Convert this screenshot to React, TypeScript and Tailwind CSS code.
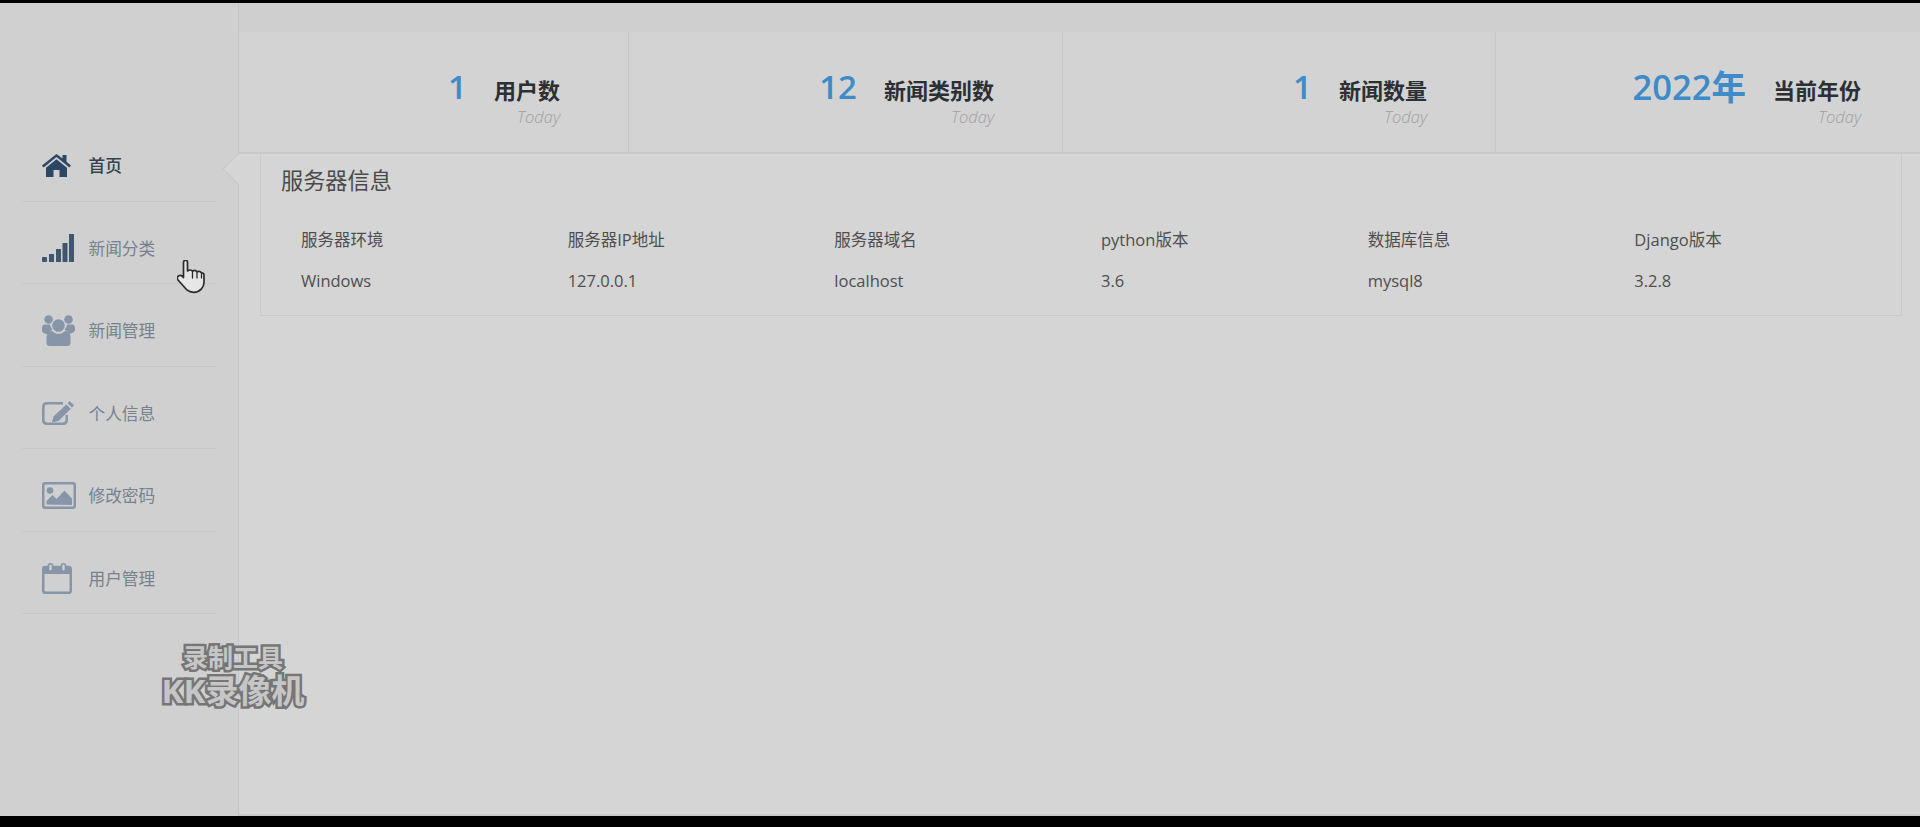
import type { ReactNode } from 'react';

const HomeIcon = () => (
  <svg width="29" height="23" viewBox="0 0 29 23" fill="#2b4763">
    <path d="M14.5 0 0 11.5l1.6 2L14.5 3l12.9 10.5 1.6-2-4.5-3.7V1h-4v3.4z" />
    <path d="M14.5 5.2 4 13.7V23h7.5v-7h6v7H25v-9.3z" />
  </svg>
);

const SignalIcon = () => (
  <svg width="32" height="28" viewBox="0 0 32 28" fill="#40566e">
    <rect x="0" y="23" width="5" height="5" rx="1" />
    <rect x="7" y="20" width="5" height="8" />
    <rect x="14" y="15" width="5" height="13" />
    <rect x="20.5" y="9" width="5" height="19" />
    <rect x="27" y="0" width="5" height="28" />
  </svg>
);

const UsersIcon = () => (
  <svg width="33" height="31" viewBox="0 0 33 31" fill="#8695a8">
    <circle cx="6.5" cy="4.5" r="4.3" />
    <circle cx="26.5" cy="4.5" r="4.3" />
    <circle cx="16.5" cy="10.5" r="6.3" />
    <path d="M0 13c0-2.5 1.5-3.5 3-3.5h5c.5 2 1 3.5 2.5 5-2 1-3.5 2.5-4 4.5C3 19.5 0 18 0 15.5z" />
    <path d="M33 13c0-2.5-1.5-3.5-3-3.5h-5c-.5 2-1 3.5-2.5 5 2 1 3.5 2.5 4 4.5 3.5-.5 6.5-2 6.5-4.5z" />
    <path d="M9.5 15.5c2 2.5 4.5 3.3 7 3.3s5-.8 7-3.3c3 1 5 3 5 6.5v6c0 2-1.5 3-3 3h-18c-1.5 0-3-1-3-3v-6c0-3.5 2-5.5 5-6.500z" />
  </svg>
);

const EditIcon = () => (
  <svg width="32" height="25" viewBox="0 0 32 25" fill="none">
    <path
      d="M21 2.3H5C2.8 2.3 1.3 3.8 1.3 6v13c0 2.200 1.500 3.700 3.700 3.700h16c2.200 0 3.700-1.500 3.700-3.700v-5"
      stroke="#8695a8"
      strokeWidth="2.5"
    />
    <path d="M27.5 0 32 4.200l-2 2.300-4.500-4.300zM24.300 3.500l4.500 4.300L16.500 20 10 21.500l1.500-6z" fill="#8695a8" />
  </svg>
);

const ImageIcon = () => (
  <svg width="34" height="27" viewBox="0 0 34 27" fill="none">
    <rect x="1.2" y="1.2" width="31.6" height="24.6" rx="2" stroke="#8695a8" strokeWidth="2.5" />
    <circle cx="8" cy="8.5" r="3.3" fill="#8695a8" />
    <path d="M4.5 22.500V19l6-6 4 4 8-8.500 7.500 8v6.500z" fill="#8695a8" />
  </svg>
);

const CalendarIcon = () => (
  <svg width="30" height="31" viewBox="0 0 30 31" fill="none">
    <rect x="1.2" y="4" width="27.6" height="25.8" rx="2" stroke="#8695a8" strokeWidth="2.5" />
    <rect x="1" y="4" width="28" height="7" fill="#8695a8" />
    <rect x="6.5" y="0.8" width="4" height="7.5" rx="2" fill="#d0d0d0" stroke="#8695a8" strokeWidth="1.6" />
    <rect x="19.5" y="0.8" width="4" height="7.5" rx="2" fill="#d0d0d0" stroke="#8695a8" strokeWidth="1.6" />
  </svg>
);

const HandCursor = () => (
  <svg
    className="absolute top-[260px] left-[177px] z-20"
    width="28"
    height="34"
    viewBox="0 0 28 34"
    fill="#e6e6e6"
    stroke="#2b2b2b"
    strokeWidth="1.7"
    strokeLinejoin="round"
    strokeLinecap="round"
  >
    <path d="M6.5 2.5c0-3 4-3 4 0V11c2-1.5 4-1.2 5 .2 1.5-1 3.5-.8 4.500.6 1.500-.8 3.500-.4 4.500 1 1.500-.2 2.500 1 2.500 2.500v7c0 5-4 10-10 10-4.500 0-7-1.500-9.500-5L1 20c-1.500-2-.5-4 1.500-4.500 1.500-.3 3 .5 4 2z" />
    <path d="M15.5 11.5V18M20 12v6M24.5 13v5" fill="none" strokeWidth="1.3" />
  </svg>
);

interface NavItem {
  label: string;
  icon: ReactNode;
  active?: boolean;
}

const navItems: NavItem[] = [
  { label: '首页', icon: <HomeIcon />, active: true },
  { label: '新闻分类', icon: <SignalIcon /> },
  { label: '新闻管理', icon: <UsersIcon /> },
  { label: '个人信息', icon: <EditIcon /> },
  { label: '修改密码', icon: <ImageIcon /> },
  { label: '用户管理', icon: <CalendarIcon /> },
];

const stats = [
  { value: '1', label: '用户数', width: 'w-[390px]', pad: 'pr-[68px]' },
  { value: '12', label: '新闻类别数', width: 'w-[434px]', pad: 'pr-[68px]' },
  { value: '1', label: '新闻数量', width: 'w-[433px]', pad: 'pr-[68px]' },
  { value: '2022年', label: '当前年份', width: 'flex-1', pad: 'pr-[59px]', strong: true },
];

const headers = ['服务器环境', '服务器IP地址', '服务器域名', 'python版本', '数据库信息', 'Django版本'];
const values = ['Windows', '127.0.0.1', 'localhost', '3.6', 'mysql8', '3.2.8'];

const App = () => {
  return (
    <div className="relative flex h-[827px] w-[1920px] flex-col overflow-hidden bg-black font-['Open_Sans','Noto_Sans_CJK_SC',sans-serif]">
      <div className="mt-[3px] flex h-[813px] bg-[#d5d5d5]">
        {/* sidebar */}
        <aside className="z-10 w-[239px] shrink-0 border-r border-[#c2c6c9] bg-[#d0d0d0] pt-[116px] pl-[22px]">
          <ul className="w-[195px]">
            {navItems.map((item) => (
              <li
                key={item.label}
                className="relative flex h-[82.5px] items-center border-b border-[#c5c9ce] pt-3 pl-5"
              >
                <span className="flex w-[46.5px] shrink-0 items-center">{item.icon}</span>
                <span
                  className={
                    item.active
                      ? 'text-[16.7px] font-medium text-[#36414e]'
                      : 'text-[16.7px] text-[#77818f]'
                  }
                >
                  {item.label}
                </span>
                {item.active && (
                  <span className="absolute top-[38.5px] left-[205px] h-[22px] w-[22px] rotate-45 border-b border-l border-[#c5c8ca] bg-[#d5d5d5]" />
                )}
              </li>
            ))}
          </ul>
        </aside>

        <div className="flex min-w-0 flex-1 flex-col border-b-2 border-[#c7cac8]">
          <div className="h-[29px] shrink-0 bg-[#cfcfcf]" />

          {/* stat row */}
          <div className="flex h-[122px] shrink-0 border-b-2 border-[#c9c9c9] bg-[#d3d3d3]">
            {stats.map((s) => (
              <div
                key={s.label}
                className={`flex justify-end border-r border-[#c9c9c9] last:border-r-0 ${s.width} ${s.pad}`}
              >
                <span
                  className={
                    s.strong
                      ? 'mt-[30px] text-[34.5px] leading-[50px] font-semibold text-[#3d8bc9]'
                      : 'mt-[30px] text-[33px] leading-[50px] font-semibold text-[#3d8bc9]'
                  }
                >
                  {s.value}
                </span>
                <div className="ml-[27px] flex flex-col items-end pt-[43px]">
                  <span className="text-[22px] leading-[30px] font-semibold text-[#2c2f33]">
                    {s.label}
                  </span>
                  <span className="mt-[1px] text-[16.5px] leading-[22px] font-light text-[#a0a0a0] italic">
                    Today
                  </span>
                </div>
              </div>
            ))}
          </div>

          {/* server info */}
          <div className="pr-[18px] pl-[21px]">
            <div className="h-[162px] border-r border-b border-l border-[#c9caca] pt-[9px]">
              <h2 className="pl-5 text-[22.2px] leading-9 text-[#4a4a4a]">服务器信息</h2>
              <div className="mt-[20px] grid w-[1640px] grid-cols-6 pl-[40px] text-[16.5px] leading-[41px] text-[#4e4e4e]">
                {headers.map((h) => (
                  <div key={h} className="whitespace-nowrap">{h}</div>
                ))}
                {values.map((v) => (
                  <div key={v}>{v}</div>
                ))}
              </div>
            </div>
          </div>
        </div>
      </div>

      {/* mouse pointer from the recording */}
      <HandCursor />

      {/* recorder watermark */}
      <div className="absolute top-[641px] left-[158px] z-20 flex w-[150px] flex-col items-center font-bold text-[#c6c6c6] [-webkit-text-stroke:5px_#767676] [paint-order:stroke_fill]">
        <span className="text-[25px] leading-[33px]">录制工具</span>
        <span className="text-[33px] leading-[33px] whitespace-nowrap">KK录像机</span>
      </div>
    </div>
  );
};

export default App;
